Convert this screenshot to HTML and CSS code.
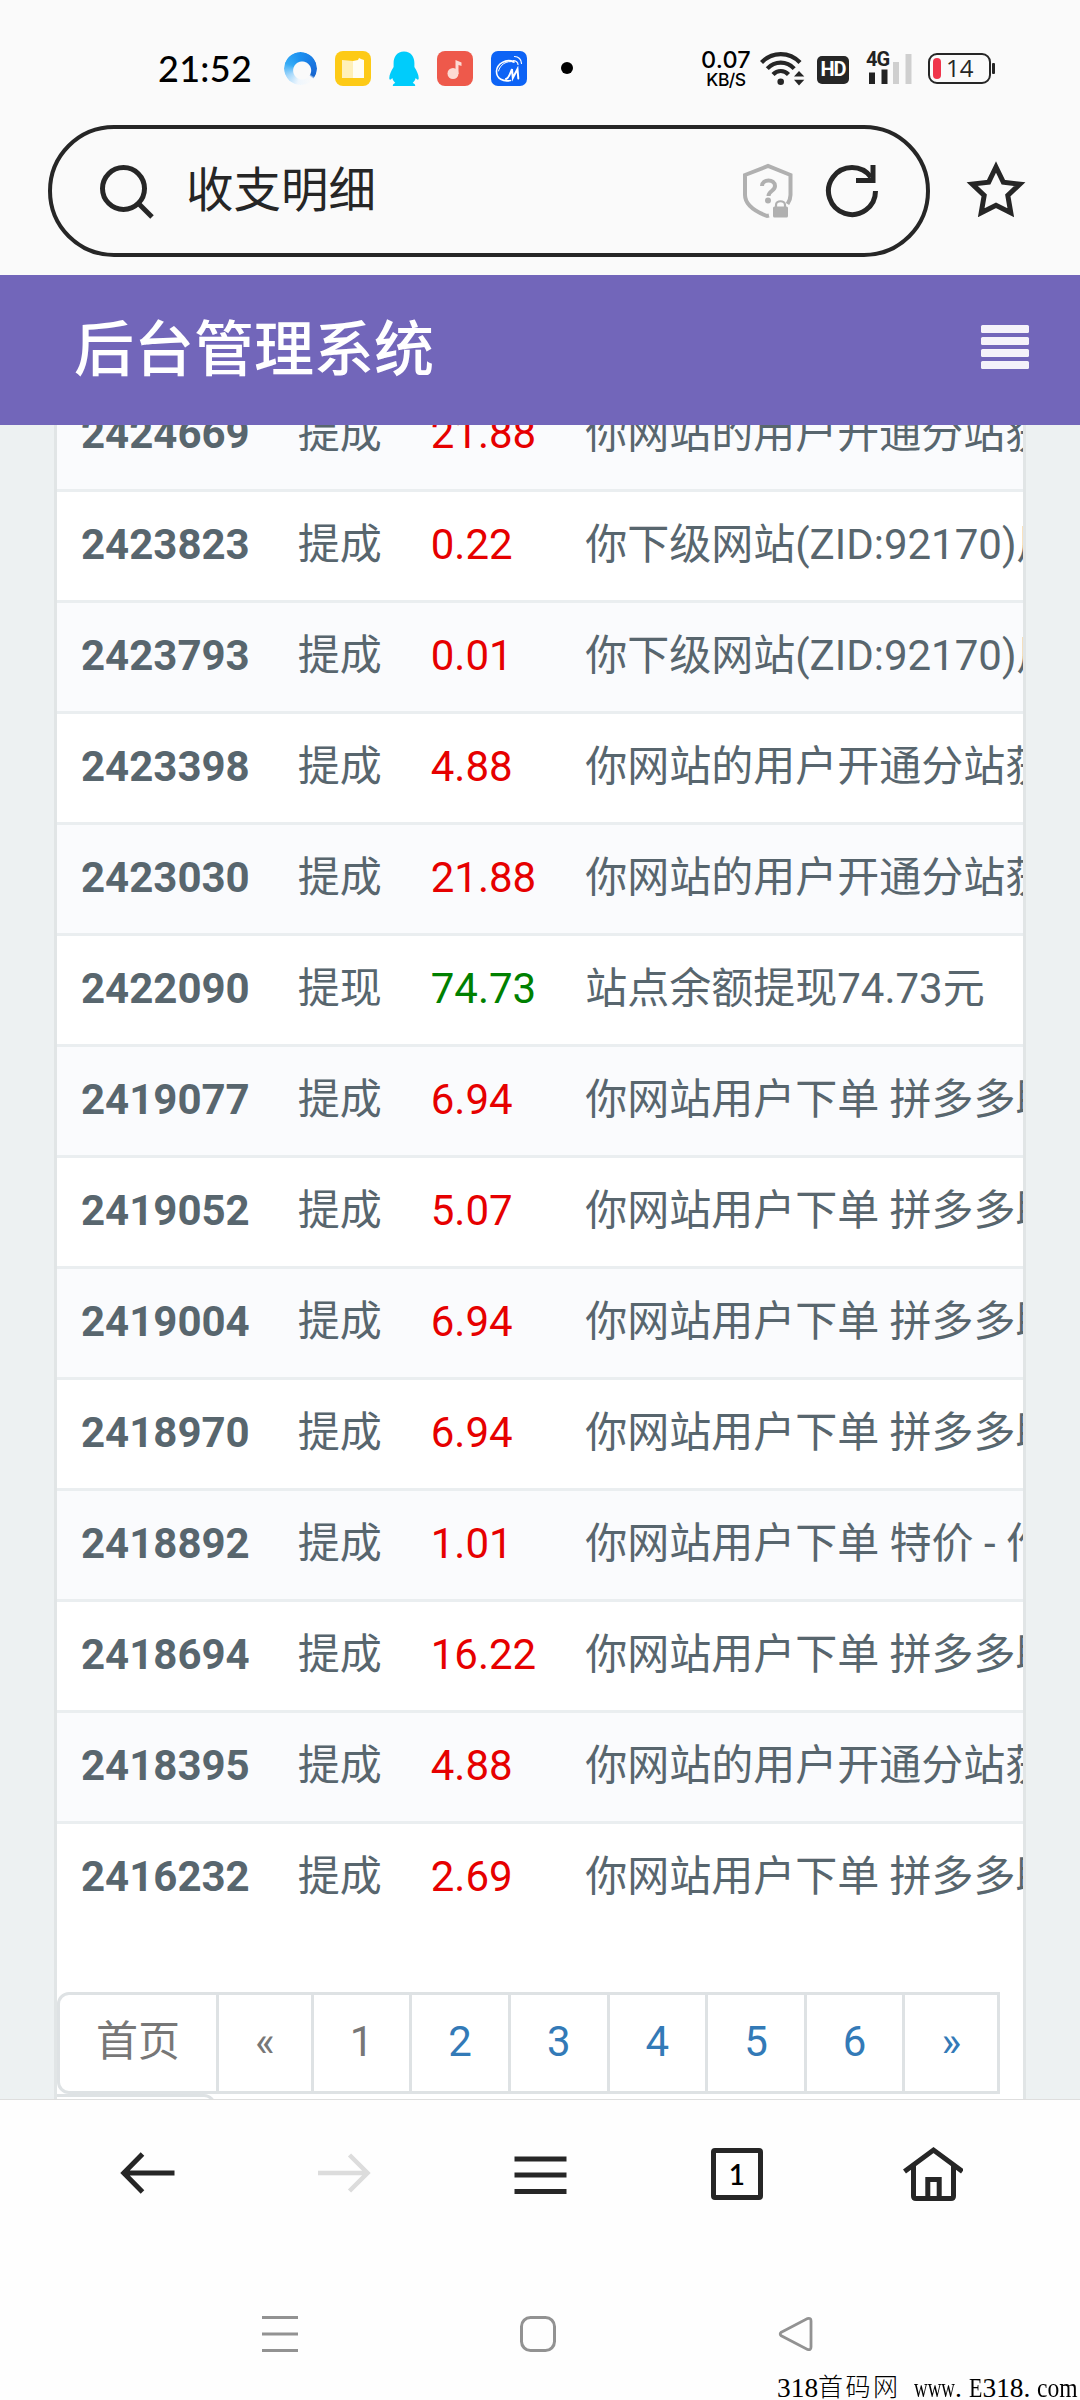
FILE: index.html
```html
<!DOCTYPE html>
<html lang="zh-CN">
<head>
<meta charset="utf-8">
<title>收支明细</title>
<link rel="stylesheet" href="styles.css">
</head>
<body>
<div class="screen">
  <header class="status">
    <span class="clock">21:52</span>
    <div class="apps">
      <div class="ring"></div>
      <svg width="36" height="36" viewBox="0 0 36 36"><rect width="36" height="35" rx="8" fill="#fdca16"/><path d="M7 9l11 1v17H7z" fill="#fff0b8"/><path d="M18 10l5-1 1-2 2 1 3 1v18H18z" fill="#fffdf2"/></svg>
      <svg width="30" height="36" viewBox="0 0 30 36"><path d="M15 .5C8 .5 4.600 6 4.600 12v4C2 20 .3 24 .3 27c0 2 1 2.500 3 0 .6 2 1.500 3.500 3 5-2 .8-2.500 1.500-2.500 3h22.400c0-1.500-.5-2.200-2.500-3 1.500-1.500 2.400-3 3-5 2 2.500 3 2 3 0 0-3-1.700-7-4.300-11v-4C25.400 6 22 .5 15 .5z" fill="#00ccfb"/></svg>
      <svg width="36" height="36" viewBox="0 0 36 36"><rect width="36" height="35" rx="8" fill="#ee594b"/><circle cx="16" cy="22.500" r="5.500" fill="#fddad3"/><path d="M18.500 23V9l6 2.500v3.500l-3-1V23z" fill="#fddad3"/></svg>
      <svg width="36" height="36" viewBox="0 0 36 36"><rect width="36" height="35" rx="7" fill="#0d63f5"/><g fill="none" stroke="#fff" stroke-linecap="round"><path d="M23 11C15 7 6 13 5.500 20c-.3 8 7 11 14 9.500" stroke-width="1.600"/><path d="M23 11c-8-2-14 3-15.500 9" stroke-width="1"/><path d="M15 28c3-1 4-5 6-10l.8 9 4.700-9 .8 9.500" stroke-width="2"/><path d="M22 9.500c3 0 5 2 5 4M23.500 5.500c4 0 7 3 7 7" stroke-width="1.200"/></g></svg>
    </div>
    <span class="dot"></span>
    <div class="speed"><b>0.07</b><i>KB/S</i></div>
    <svg class="wifi" width="46" height="36" viewBox="0 0 46 36"><g fill="none" stroke="#262626" stroke-width="4.200"><path d="M1.500 11.500C12 .2 29.500 .2 40 11.500"/><path d="M7.300 17.600c7.500-8 19.400-8 26.900 0"/><path d="M13 23.500c4.500-4.700 11-4.700 15.500 0"/></g><circle cx="20.700" cy="30.800" r="3.300" fill="#262626"/><path d="M34 25.500l5-5.500 5.300 5.500zM34 28.800h10.300l-5.300 5.700z" fill="#262626"/></svg>
    <span class="hd">HD</span>
    <div class="signal"><span>4G</span><svg width="46" height="34" viewBox="0 0 46 34"><path d="M3 21.500h6V33H3zM15.500 18.500h6V33h-6z" fill="#222"/><path d="M27 11h6v22h-6zM39.500 3h6v30h-6z" fill="#cfcfcf"/></svg></div>
    <div class="battery"><span>14</span></div>
  </header>

  <div class="address">
    <div class="pill">
      <svg width="56" height="56" viewBox="0 0 56 56" fill="none" stroke="#262626" stroke-width="5"><circle cx="25.500" cy="25.500" r="21"/><path d="M41 41l13 13"/></svg>
      <span class="query">收支明细</span>
      <svg class="shield" width="52" height="56" viewBox="0 0 52 56"><path d="M27 52.500l-2 .5C12 48 3 42 3 32V12L26 3l22.500 9v20c0 3-1 6-3 9" fill="none" stroke="#b0b0b0" stroke-width="4"/><path d="M20 23c0-7.500 13-7.500 13 0 0 5-6.500 5-6.500 10" fill="none" stroke="#b0b0b0" stroke-width="4"/><circle cx="26" cy="37.500" r="3" fill="#b0b0b0"/><rect x="31" y="43.500" width="15" height="11" rx="1.500" fill="#b0b0b0"/><path d="M34 44v-2c0-5 9-5 9 0v2" fill="none" stroke="#b0b0b0" stroke-width="2.200"/></svg>
      <svg width="54" height="56" viewBox="0 0 54 56" fill="none" stroke="#262626" stroke-width="5"><path d="M50.500 28A23.500 23.500 0 1 1 46 14.200"/><path d="M48 2v15.500H31"/></svg>
    </div>
    <svg class="star" width="60" height="60" viewBox="0 0 60 60"><path d="M30 7l7.300 15.200 16.500 1.900-12 11.400 3 17.300L30 45.200l-14.800 7.600 3-17.300-12-11.400 16.500-1.900z" fill="none" stroke="#262626" stroke-width="5"/></svg>
  </div>

  <div class="titlebar">
    <h1>后台管理系统</h1>
    <div class="bars"><i></i><i></i><i></i><i></i></div>
  </div>

  <main class="page">
    <section class="panel">
      <table>
        <tr><th>2424669</th><td>提成</td><td class="red">21.88</td><td>你网站的用户开通分站获得21.88元提成</td></tr>
        <tr><th>2423823</th><td>提成</td><td class="red">0.22</td><td>你下级网站(ZID:92170)用户下单</td></tr>
        <tr><th>2423793</th><td>提成</td><td class="red">0.01</td><td>你下级网站(ZID:92170)用户下单</td></tr>
        <tr><th>2423398</th><td>提成</td><td class="red">4.88</td><td>你网站的用户开通分站获得4.88元提成</td></tr>
        <tr><th>2423030</th><td>提成</td><td class="red">21.88</td><td>你网站的用户开通分站获得21.88元提成</td></tr>
        <tr><th>2422090</th><td>提现</td><td class="green">74.73</td><td>站点余额提现74.73元</td></tr>
        <tr><th>2419077</th><td>提成</td><td class="red">6.94</td><td>你网站用户下单 拼多多助力</td></tr>
        <tr><th>2419052</th><td>提成</td><td class="red">5.07</td><td>你网站用户下单 拼多多助力</td></tr>
        <tr><th>2419004</th><td>提成</td><td class="red">6.94</td><td>你网站用户下单 拼多多助力</td></tr>
        <tr><th>2418970</th><td>提成</td><td class="red">6.94</td><td>你网站用户下单 拼多多助力</td></tr>
        <tr><th>2418892</th><td>提成</td><td class="red">1.01</td><td>你网站用户下单 特价 - 作品</td></tr>
        <tr><th>2418694</th><td>提成</td><td class="red">16.22</td><td>你网站用户下单 拼多多助力</td></tr>
        <tr><th>2418395</th><td>提成</td><td class="red">4.88</td><td>你网站的用户开通分站获得4.88元提成</td></tr>
        <tr><th>2416232</th><td>提成</td><td class="red">2.69</td><td>你网站用户下单 拼多多助力</td></tr>
      </table>
      <ul class="pagination">
        <li class="off">首页</li><li class="off">«</li><li class="off">1</li><li>2</li><li>3</li><li>4</li><li>5</li><li>6</li><li>»</li><li class="last">尾页</li>
      </ul>
    </section>
  </main>

  <nav class="toolbar">
    <svg width="60" height="60" viewBox="0 0 60 60" fill="none" stroke="#262626" stroke-width="5"><path d="M56.500 29H7M24.500 10L5.800 29l18.700 19"/></svg>
    <svg width="60" height="60" viewBox="0 0 60 60" fill="none" stroke="#dcdcdc" stroke-width="4.500"><path d="M4 29h49M35.500 11l18 18-18 18"/></svg>
    <svg width="60" height="60" viewBox="0 0 60 60" fill="none" stroke="#262626" stroke-width="5"><path d="M3.500 15h52M3.500 31h52M3.500 47.500h52"/></svg>
    <div class="tabs"><span>1</span></div>
    <svg width="60" height="60" viewBox="0 0 60 60" fill="none" stroke="#262626" stroke-width="5"><path d="M1.500 27.500L30.500 6l29 21.500M10.500 22v30q0 2.500 2.500 2.500h35q2.500 0 2.500-2.500V22M24.800 54V35.500h11.400V54"/></svg>
  </nav>

  <footer class="sysnav">
    <svg class="recent" width="36" height="38" viewBox="0 0 36 38" stroke="#929292" stroke-width="3"><path d="M0 2.500h36M0 19h36M0 35.500h36"/></svg>
    <svg class="homekey" width="36" height="38" viewBox="0 0 36 38" fill="none" stroke="#929292" stroke-width="3"><rect x="1.500" y="2.500" width="33" height="33" rx="9"/></svg>
    <svg class="backkey" width="36" height="38" viewBox="0 0 36 38" fill="none" stroke="#929292" stroke-width="2.800"><path d="M3.300 17.200L29.500 3.600q3.500-1 3.500 2.400v26q0 3.400-3.500 2.400L3.300 20.800q-2.200-1.800 0-3.600z"/></svg>
    <div class="mark">318<em>首码网</em><span class="space"></span><span class="www">www</span><span class="point">.</span><span class="e">E</span>318<span class="point">.</span><span class="com">com</span></div>
  </footer>
</div>
</body>
</html>
```
FILE: styles.css
```css
* { box-sizing: border-box; }
body { margin: 0; background: #fafafa; }
svg { display: block; flex: none; }
.screen {
  width: 1080px; height: 2400px; overflow: hidden;
  display: flex; flex-direction: column;
  font-family: Roboto, "Noto Sans CJK SC", sans-serif;
}

/* phone status bar */
.status { height: 125px; flex: none; padding: 51px 0 0 158px; display: flex; align-items: flex-start; color: #000; }
.clock { font: 500 36px/35px Lato, sans-serif; width: 126px; letter-spacing: .3px; }
.apps { display: flex; width: 243px; justify-content: space-between; align-items: flex-start; }
.ring {
  width: 33px; height: 33px; border-radius: 50%; margin: 1px 0 0 0;
  background: conic-gradient(#1a8ff0 0deg, #1a6cd8 100deg, #1766cc 120deg, #fafafa 130deg, #eef6fd 190deg, #a5d8fb 240deg, #35abf5 290deg, #1a8ff0 360deg);
  -webkit-mask: radial-gradient(circle at 55% 56%, transparent 8.500px, #000 9.500px);
  mask: radial-gradient(circle at 55% 56%, transparent 8.500px, #000 9.500px);
}
.dot { width: 12px; height: 12px; border-radius: 50%; background: #000; margin: 11px 0 0 34px; }
.speed { margin-left: 127px; width: 52px; display: flex; flex-direction: column; align-items: center; font-family: Inter, sans-serif; }
.speed b { font-weight: 500; font-size: 23.500px; line-height: 17px; letter-spacing: .2px; }
.speed i { font-style: normal; font-weight: 500; font-size: 17.500px; line-height: 13px; margin-top: 5px; letter-spacing: -.5px; }
.wifi { margin-left: 8px; }
.hd { margin: 5px 0 0 11px; width: 32px; height: 28px; border-radius: 5px; background: #262626; color: #fff; font: bold 20px/27px Roboto, sans-serif; text-align: center; letter-spacing: -1px; }
.signal { margin-left: 17px; width: 46px; display: grid; }
.signal > * { grid-area: 1 / 1; }
.signal span { font: bold 20px/16px Roboto, sans-serif; letter-spacing: -1px; color: #222; }
.battery { margin: 2px 0 0 16px; width: 63px; height: 31px; border: 2.500px solid #262626; border-radius: 9px; position: relative; padding-left: 16px; color: #262626; }
.battery span { font: 24px/25px "Open Sans", sans-serif; }
.battery::before { content: ""; position: absolute; left: 3px; top: 3px; width: 8px; height: 21px; border-radius: 4px; background: #f0354b; }
.battery::after { content: ""; position: absolute; right: -6px; top: 8px; width: 3px; height: 11px; background: #262626; border-radius: 1px; }

/* address bar */
.address { height: 150px; flex: none; padding-left: 48px; display: flex; align-items: flex-start; }
.pill { width: 882px; height: 132px; border: 4px solid #262626; border-radius: 66px; padding: 0 47px 0 46px; display: flex; align-items: center; }
.query { flex: 1; margin-left: 32px; font-size: 47.500px; line-height: 60px; color: #262626; }
.shield { margin-right: 31px; }
.star { margin: 35px 0 0 36px; }

/* site header */
.titlebar { height: 150px; flex: none; background: #7266ba; padding: 0 51px 0 74px; display: flex; align-items: center; justify-content: space-between; }
.titlebar h1 { margin: 2px 0 0; font-size: 60px; line-height: 90px; font-weight: 500; color: #fff; }
.bars { display: flex; flex-direction: column; gap: 4px; width: 48px; margin-top: -6px; }
.bars i { height: 8px; border-radius: 1.500px; background: #f4f2fa; }

/* records */
.page { height: 1674px; flex: none; overflow: hidden; background: #edf1f2; padding: 0 54px; }
.panel { height: 1760px; margin-top: -47px; border: solid #e1e5e6; border-width: 0 3px; background: #fff; overflow: hidden; color: #58666e; }
table { border-collapse: separate; border-spacing: 0; }
th, td { height: 111px; padding: 23px 24px 25px; border-top: 3px solid #eaeef0; font-size: 42px; line-height: 60px; text-align: left; white-space: nowrap; font-weight: 400; }
th { font-weight: 700; }
td:nth-child(3) { padding-left: 25px; padding-right: 25px; }
tr:nth-child(odd) { background: #fafbfd; }
.red { color: #e60000; }
.green { color: #008000; }
.pagination { list-style: none; margin: 60px 0 0; padding: 0; display: flex; flex-wrap: wrap; font-size: 42px; line-height: 60px; color: #337ab7; }
.pagination li { height: 102px; padding: 17px 36px 19px; border: 3px solid #dee2e4; margin-right: -3px; }
.pagination li:first-child { border-radius: 12px 0 0 12px; }
.pagination .off { color: #777; }
.pagination .last { margin-left: -3px; border-radius: 0 12px 12px 0; }

/* browser toolbar */
.toolbar { height: 151px; flex: none; border-top: 1px solid #dedede; background: #fefefe; padding: 44px 117px 0 118px; display: flex; justify-content: space-between; }
.tabs { width: 60px; height: 60px; padding: 4px; }
.tabs span { display: block; width: 52px; height: 52px; border: 5px solid #262626; border-radius: 4px; font: 600 28px/42px Lato, sans-serif; text-align: center; color: #000; }

/* system navigation */
.sysnav { height: 150px; flex: none; background: #fefefe; display: grid; grid-template-columns: 262px 36px 222px 36px 222px 36px 1fr; grid-template-rows: 121px 29px; }
.sysnav svg { margin-top: 65px; }
.recent { grid-column: 2; }
.homekey { grid-column: 4; }
.backkey { grid-column: 6; }
.mark { grid-column: 1 / -1; grid-row: 2; justify-self: end; width: 303px; display: flex; white-space: nowrap; font: 27.400px/34px "Liberation Serif", "Noto Sans CJK SC", serif; color: #000; }
.mark em { font-style: normal; font-weight: 300; font-size: 25px; letter-spacing: 2.400px; }
.mark span { flex: none; width: .5em; }
.mark .www { width: 1.500em; transform: scaleX(.69); transform-origin: left; }
.mark .e { transform: scaleX(.8); transform-origin: left; }
.mark .com { width: 1.500em; transform: scaleX(.86); transform-origin: left; }
```
